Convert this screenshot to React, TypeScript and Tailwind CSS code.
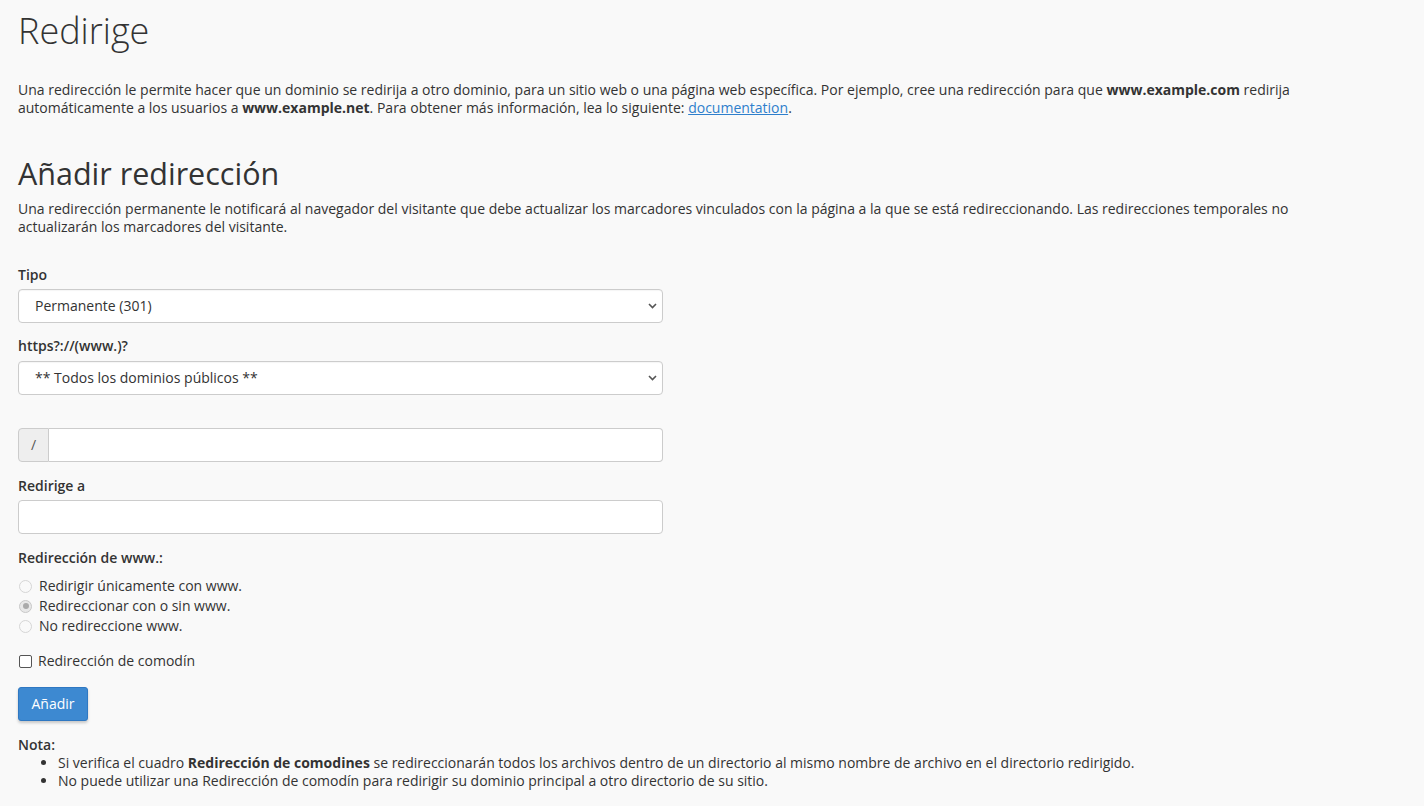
import { useState } from 'react';

const Chevron = () => (
  <svg
    className="pointer-events-none absolute right-[6px] top-1/2 -translate-y-1/2"
    width="9"
    height="6"
    viewBox="0 0 9 6"
    fill="none"
  >
    <path d="M1 1l3.5 3.5L8 1" stroke="#555" strokeWidth="1.6" />
  </svg>
);

const Select = ({ value, options }: { value: string; options: string[] }) => (
  <div className="relative w-[645px]">
    <select
      defaultValue={value}
      className="h-[34px] w-full appearance-none rounded-[4px] border border-[#ccc] bg-white pl-4 pr-8 text-sm text-[#333] shadow-[inset_0_1px_1px_rgba(0,0,0,0.04)] outline-none"
    >
      {options.map((o) => (
        <option key={o}>{o}</option>
      ))}
    </select>
    <Chevron />
  </div>
);

const Radio = ({ checked, label }: { checked?: boolean; label: string }) => (
  <label className="flex h-5 items-center gap-[7px]">
    <span
      className={
        checked
          ? 'ml-px flex h-[13px] w-[13px] items-center justify-center rounded-full border border-[#c8c8c8] bg-[#e8e8e8]'
          : 'ml-px h-[13px] w-[13px] rounded-full border border-[#d6d6d6] bg-[#f9f9f9]'
      }
    >
      {checked && <span className="h-[6px] w-[6px] rounded-full bg-[#aaa]" />}
    </span>
    <span>{label}</span>
  </label>
);

export default function App() {
  const [wild, setWild] = useState(false);

  return (
    <div className="min-h-screen bg-[#f9f9f9] px-[18px] pt-[11px] pb-4 text-sm leading-[18px] text-[#333] [font-family:'Open_Sans',sans-serif]">
      <h1 className="text-[36px] font-light leading-[40px]">Redirige</h1>

      <p className="mt-[30px] max-w-[1310px]">
        Una redirección le permite hacer que un dominio se redirija a otro dominio, para un sitio web o una página web
        específica. Por ejemplo, cree una redirección para que <b>www.example.com</b> redirija automáticamente a los
        usuarios a <b>www.example.net</b>. Para obtener más información, lea lo siguiente:{' '}
        <a href="#" className="text-[#2f7fcc] underline">
          documentation
        </a>
        .
      </p>

      <h2 className="mt-10 text-[30.5px] font-normal leading-[33px]">Añadir redirección</h2>
      <p className="mt-[10px] max-w-[1310px]">
        Una redirección permanente le notificará al navegador del visitante que debe actualizar los marcadores
        vinculados con la página a la que se está redireccionando. Las redirecciones temporales no actualizarán los
        marcadores del visitante.
      </p>

      <div className="mt-[29px] flex flex-col">
        <label className="mb-1 font-semibold leading-5">Tipo</label>
        <Select value="Permanente (301)" options={['Permanente (301)', 'Temporal (302)']} />

        <label className="mt-[13px] mb-[5px] font-semibold leading-5">https?://(www.)?</label>
        <Select value="** Todos los dominios públicos **" options={['** Todos los dominios públicos **']} />

        <div className="mt-[33px] flex h-[34px] w-[645px]">
          <span className="flex w-[31px] shrink-0 items-center justify-center rounded-l-[4px] border border-[#ccc] bg-[#eee] text-[#555]">
            /
          </span>
          <input className="w-full rounded-r-[4px] border border-l-0 border-[#ccc] bg-white px-3 outline-none" />
        </div>

        <label className="mt-[14px] mb-1 font-semibold leading-5">Redirige a</label>
        <input className="h-[34px] w-[645px] rounded-[4px] border border-[#ccc] bg-white px-3 outline-none" />

        <label className="mt-[14px] font-semibold leading-5">Redirección de www.:</label>
        <div className="mt-2 flex flex-col">
          <Radio label="Redirigir únicamente con www." />
          <Radio checked label="Redireccionar con o sin www." />
          <Radio label="No redireccione www." />
        </div>

        <label className="mt-[15px] flex h-5 cursor-pointer items-center gap-[6px]">
          <input
            type="checkbox"
            checked={wild}
            onChange={(e) => setWild(e.target.checked)}
            className="ml-px h-[13px] w-[13px] appearance-none rounded-[2px] border border-[#555] bg-white checked:bg-[#3d88d0]"
          />
          <span>Redirección de comodín</span>
        </label>

        <div className="mt-4">
          <button className="h-[34px] w-[70px] rounded-[3px] border border-[#2f78c2] bg-[#3d89d1] text-sm text-white shadow-[0_2px_3px_rgba(0,0,0,0.2)]">
            Añadir
          </button>
        </div>
      </div>

      <div className="mt-[15px]">
        <p className="font-semibold">Nota:</p>
        <ul className="list-disc pl-10">
          <li>
            Si verifica el cuadro <b>Redirección de comodines</b> se redireccionarán todos los archivos dentro de un
            directorio al mismo nombre de archivo en el directorio redirigido.
          </li>
          <li>No puede utilizar una Redirección de comodín para redirigir su dominio principal a otro directorio de su sitio.</li>
        </ul>
      </div>
    </div>
  );
}
